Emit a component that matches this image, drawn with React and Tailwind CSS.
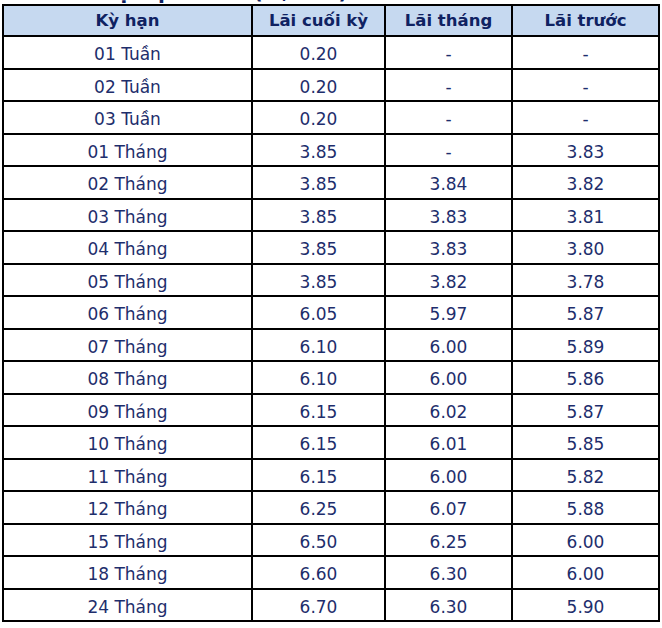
import React from "react";

const rows = [
  ["01 Tuần", "0.20", "-", "-"],
  ["02 Tuần", "0.20", "-", "-"],
  ["03 Tuần", "0.20", "-", "-"],
  ["01 Tháng", "3.85", "-", "3.83"],
  ["02 Tháng", "3.85", "3.84", "3.82"],
  ["03 Tháng", "3.85", "3.83", "3.81"],
  ["04 Tháng", "3.85", "3.83", "3.80"],
  ["05 Tháng", "3.85", "3.82", "3.78"],
  ["06 Tháng", "6.05", "5.97", "5.87"],
  ["07 Tháng", "6.10", "6.00", "5.89"],
  ["08 Tháng", "6.10", "6.00", "5.86"],
  ["09 Tháng", "6.15", "6.02", "5.87"],
  ["10 Tháng", "6.15", "6.01", "5.85"],
  ["11 Tháng", "6.15", "6.00", "5.82"],
  ["12 Tháng", "6.25", "6.07", "5.88"],
  ["15 Tháng", "6.50", "6.25", "6.00"],
  ["18 Tháng", "6.60", "6.30", "6.00"],
  ["24 Tháng", "6.70", "6.30", "5.90"],
];

const headers = ["Kỳ hạn", "Lãi cuối kỳ", "Lãi tháng", "Lãi trước"];

export default function App() {
  return (
    <div
      className="bg-white w-[662px] h-[628px] overflow-hidden"
      style={{ fontFamily: '"DejaVu Sans", Verdana, sans-serif' }}
    >
      <div className="h-[4px] overflow-hidden pl-[46px]">
        <div className="mt-[-20px] leading-[24px] text-[20px] font-bold text-[#0f2262] whitespace-nowrap">
          Tiết kiệm phát tài (%/năm)
        </div>
      </div>
      <div className="ml-[2px] w-fit bg-black p-[2px] grid grid-cols-[247px_131px_125px_145px] gap-[2px]">
        {headers.map((h) => (
          <div
            key={h}
            className="h-[29px] bg-[#c6d9f0] flex items-center justify-center pt-[1px] text-[16.5px] font-bold text-[#0f2262] whitespace-nowrap"
          >
            {h}
          </div>
        ))}
        {rows.map((r, i) =>
          r.map((c, j) => (
            <div
              key={i + "-" + j}
              className="h-[30.5px] bg-white flex items-center justify-center pt-[5px] text-[17px] text-[#1e2e6c] whitespace-nowrap"
            >
              {c}
            </div>
          ))
        )}
      </div>
    </div>
  );
}
